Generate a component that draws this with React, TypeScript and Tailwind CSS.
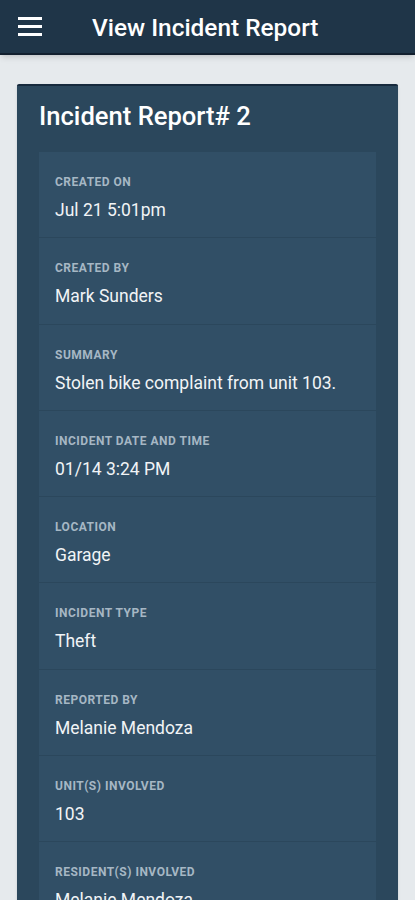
const FIELDS = [
  { label: "Created On", value: "Jul 21 5:01pm" },
  { label: "Created By", value: "Mark Sunders" },
  { label: "Summary", value: "Stolen bike complaint from unit 103." },
  { label: "Incident Date and Time", value: "01/14 3:24 PM" },
  { label: "Location", value: "Garage" },
  { label: "Incident Type", value: "Theft" },
  { label: "Reported By", value: "Melanie Mendoza" },
  { label: "Unit(s) Involved", value: "103" },
  { label: "Resident(s) Involved", value: "Melanie Mendoza" },
];

export default function App() {
  return (
    <div
      className="h-[900px] overflow-hidden bg-[#e6eaed]"
      style={{ fontFamily: "Roboto, 'Liberation Sans', sans-serif" }}
    >
      {/* Top bar */}
      <header className="flex h-[55px] items-center border-b-2 border-[#121f2e] bg-[#1f3548] shadow-md">
        <div className="flex w-[92px] pl-[18px]">
          <div className="flex w-[24px] flex-col gap-[5px]">
            <span className="h-[3px] bg-white" />
            <span className="h-[3px] bg-white" />
            <span className="h-[3px] bg-white" />
          </div>
        </div>
        <h1 className="pt-[3px] text-[24.4px] font-medium text-white">View Incident Report</h1>
      </header>

      <div className="px-[17px] pt-[29px]">
        <section className="rounded-[2px] border-t-2 border-[#172a3d] bg-[#2b475c] px-[22px] pb-8 shadow">
          <h2 className="pt-[13px] pb-[19px] text-[25.6px] font-medium leading-[34px] text-white">
            Incident Report# 2
          </h2>

          <div className="flex flex-col gap-px">
            {FIELDS.map((f) => (
              <div key={f.label} className="h-[85.3px] bg-[#314f66] px-4 pt-[23px]">
                <div className="text-[12px] font-bold uppercase leading-[14px] tracking-[0.5px] text-[#a6b7c4]">
                  {f.label}
                </div>
                <div className="mt-[9px] text-[17.5px] leading-[24px] text-[#f1f4f6]">{f.value}</div>
              </div>
            ))}
          </div>
        </section>
      </div>
    </div>
  );
}
